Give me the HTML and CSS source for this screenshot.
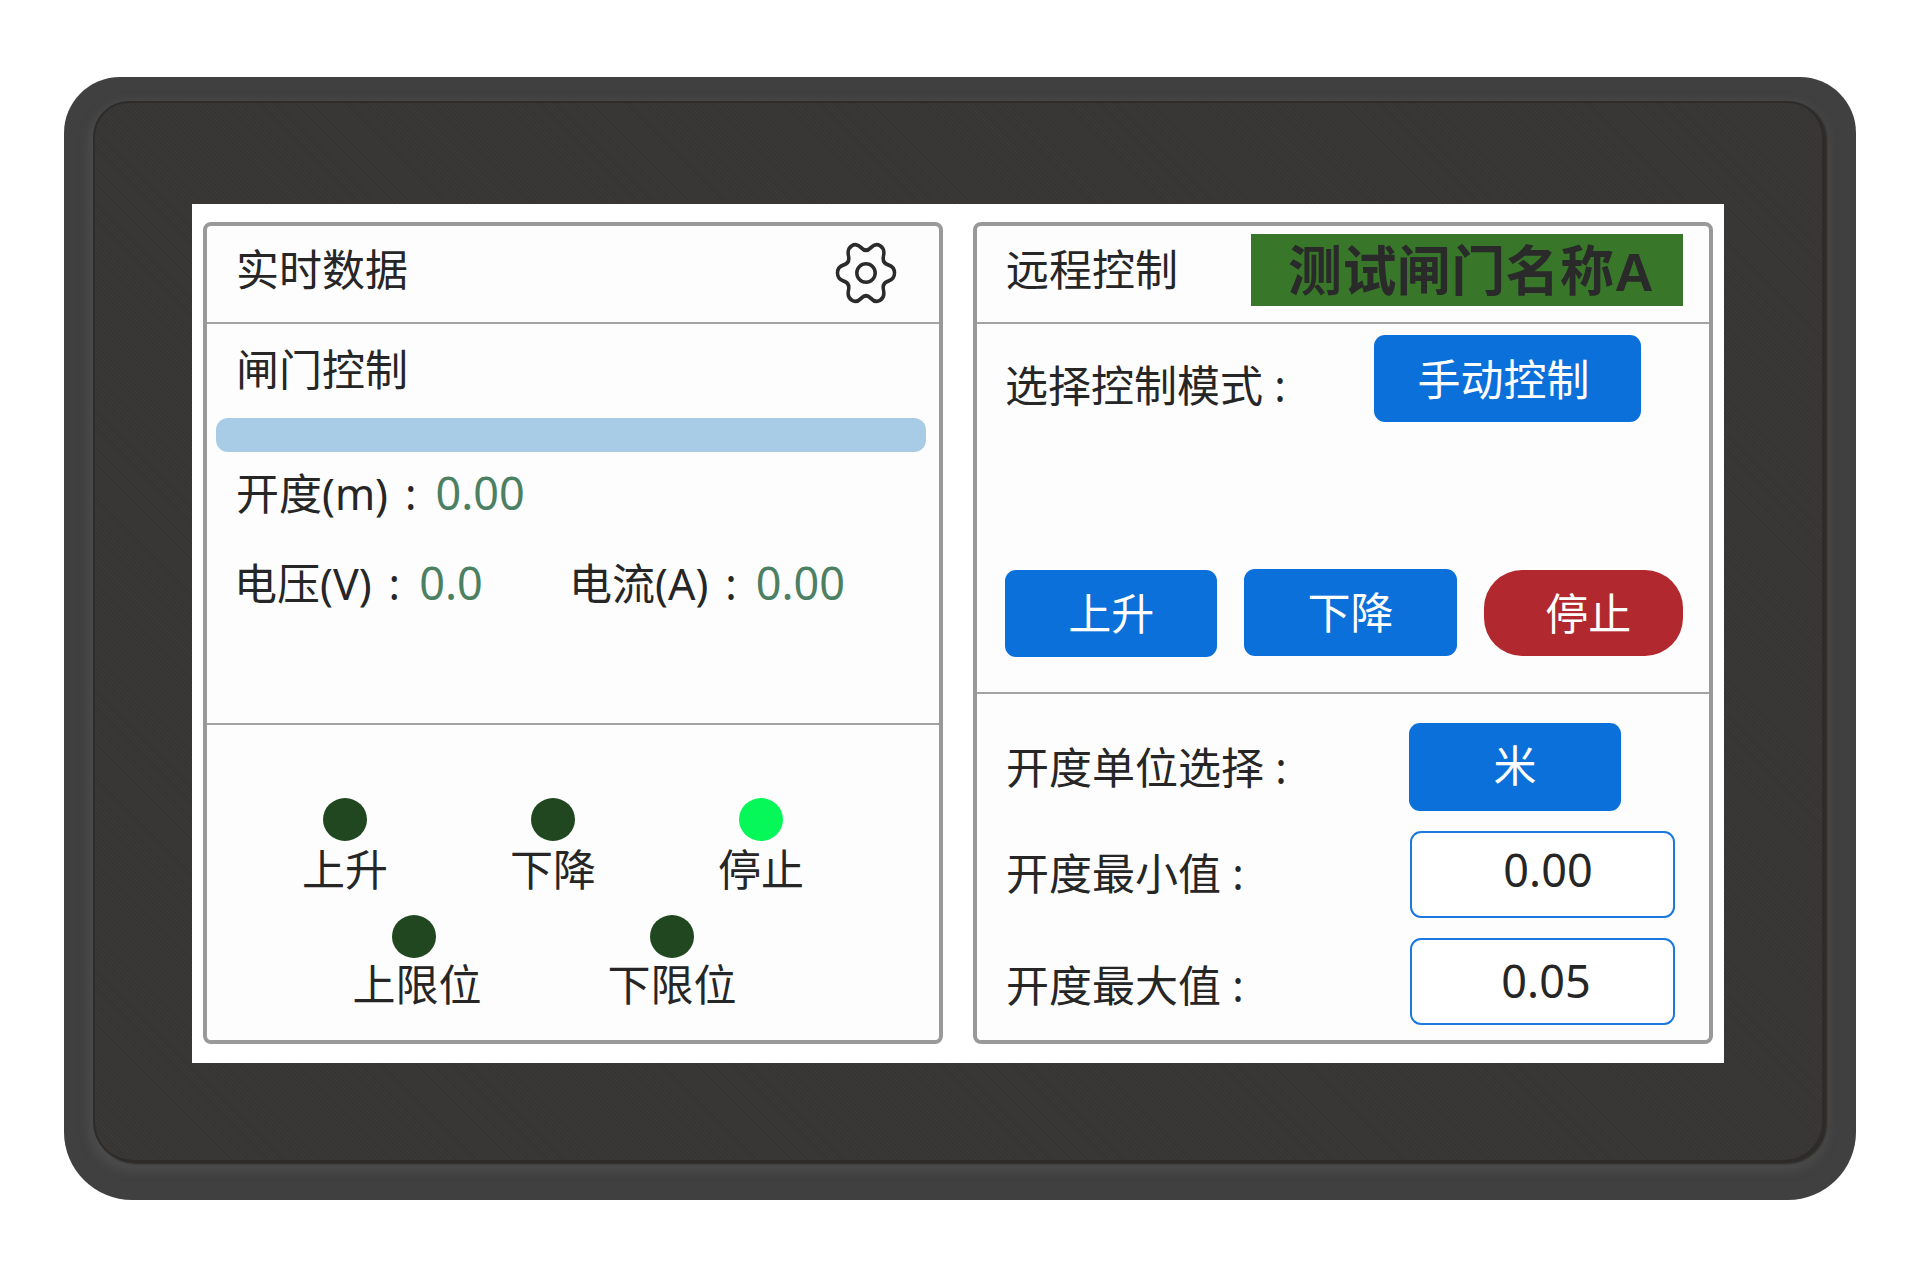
FILE: index.html
```html
<!DOCTYPE html>
<html lang="zh-CN">
<head>
  <meta charset="UTF-8" />
  <title>闸门控制</title>
  <link rel="stylesheet" href="styles.css">
</head>
<body>
  <div class="bezel">
    <div class="glass">
      <div class="screen">

        <section class="panel">
          <div class="panel-head">
            <span class="head-title">实时数据</span>
            <svg class="gear" viewBox="-32 -32 64 64" aria-label="设置">
              <path transform="scale(1 1.1)" d="M29.45 0Q29.45 5.72 22.95 7.61Q16.45 9.5 18.07 16.07Q19.68 22.64 14.73 25.5Q9.77 28.37 4.89 23.69Q0 19 -4.89 23.69Q-9.77 28.37 -14.73 25.5Q-19.68 22.64 -18.07 16.07Q-16.45 9.5 -22.95 7.61Q-29.45 5.72 -29.45 0Q-29.45 -5.72 -22.95 -7.61Q-16.45 -9.5 -18.07 -16.07Q-19.68 -22.64 -14.73 -25.5Q-9.77 -28.37 -4.89 -23.69Q0 -19 4.89 -23.69Q9.77 -28.37 14.73 -25.5Q19.68 -22.64 18.07 -16.07Q16.45 -9.5 22.95 -7.61Q29.45 -5.72 29.45 0Z" />
              <circle cx="0" cy="0" r="9.5" />
            </svg>
          </div>

          <div class="data-block">
            <div class="data-title">闸门控制</div>
            <div class="level-bar"></div>
            <div class="data-row opening">
              <span class="data-item">开度(m)<span class="colon">:</span><span class="value">0.00</span></span>
            </div>
            <div class="data-row power">
              <span class="data-item voltage">电压(V)<span class="colon">:</span><span class="value">0.0</span></span>
              <span class="data-item">电流(A)<span class="colon">:</span><span class="value">0.00</span></span>
            </div>
          </div>

          <div class="lights">
            <div class="light-row first">
              <div class="light"><i class="dot"></i><span>上升</span></div>
              <div class="light"><i class="dot"></i><span>下降</span></div>
              <div class="light"><i class="dot on"></i><span>停止</span></div>
            </div>
            <div class="light-row second">
              <div class="light"><i class="dot"></i><span class="upper-limit">上限位</span></div>
              <div class="light"><i class="dot"></i><span>下限位</span></div>
            </div>
          </div>
        </section>

        <section class="panel">
          <div class="panel-head">
            <span class="head-title">远程控制</span>
            <span class="gate-name">测试闸门名称A</span>
          </div>

          <div class="control-block">
            <div class="mode-row">
              <span class="field-label">选择控制模式 :</span>
              <button class="btn mode-btn">手动控制</button>
            </div>
            <div class="action-row">
              <button class="btn action-btn">上升</button>
              <button class="btn action-btn down">下降</button>
              <button class="btn stop-btn">停止</button>
            </div>
          </div>

          <div class="range-block">
            <div class="range-row">
              <span class="field-label unit-label">开度单位选择 :</span>
              <button class="btn unit-btn">米</button>
            </div>
            <div class="range-row">
              <span class="field-label">开度最小值 :</span>
              <div class="num-box min-box">0.00</div>
            </div>
            <div class="range-row">
              <span class="field-label max-label">开度最大值 :</span>
              <div class="num-box max-box">0.05</div>
            </div>
          </div>
        </section>

      </div>
    </div>
  </div>
</body>
</html>
```

FILE: styles.css
```css
* {
  box-sizing: border-box;
}

body {
  margin: 0;
  background: #fff;
  color: #262626;
  font-family: "Noto Sans", "Noto Sans CJK SC", sans-serif;
  font-size: 43px;
  line-height: 48px;
}

.bezel {
  width: 1792px;
  height: 1123px;
  margin: 77px 0 0 64px;
  padding: 26px 34px 40px 31px;
  background: #404040;
  border-radius: 56px 56px 68px 68px;
}

.glass {
  height: 100%;
  padding: 101px 98px 97px 97px;
  background-color: #3a3836;
  background-image: repeating-linear-gradient(45deg, rgba(0,0,0,0.07) 0 1px, transparent 1px 3px);
  border-radius: 34px 34px 38px 38px;
  box-shadow: 0 0 0 2px #2e2b28, 3px 2px 2px 2px #2e2b28, 0 5px 9px 7px rgba(84, 84, 86, 0.55);
}

.screen {
  display: flex;
  gap: 30px;
  height: 859px;
  padding: 18px 11px 19px;
  background: #fff;
}

.panel {
  width: 740px;
  height: 822px;
  background: #fdfdfd;
  border: 4px solid #999;
  border-radius: 8px;
}

.panel-head {
  display: flex;
  align-items: center;
  justify-content: space-between;
  height: 98px;
  padding: 0 29px 8px;
  border-bottom: 2px solid #a3a3a3;
}

.gear {
  width: 62px;
  height: 62px;
  margin: 6px 13px 0 0;
  fill: none;
  stroke: #2b2b2b;
  stroke-width: 3.6;
}

.gate-name {
  width: 432px;
  height: 72px;
  margin-right: -3px;
  padding-left: 37px;
  background: #38772a;
  color: #2a2a2a;
  font-family: "Liberation Sans", "Noto Sans CJK SC", sans-serif;
  font-size: 54px;
  font-weight: 700;
  letter-spacing: 0.4px;
  line-height: 76px;
  white-space: nowrap;
}

/* left panel */
.data-block {
  height: 401px;
  padding: 22px 13px 0 9px;
  border-bottom: 2px solid #a3a3a3;
}

.data-title {
  padding-left: 20px;
}

.level-bar {
  height: 34px;
  margin-top: 24px;
  background: #a9cce6;
  border-radius: 12px;
}

.data-row {
  display: flex;
  padding-left: 20px;
}

.opening {
  margin-top: 17px;
}

.power {
  margin-top: 41px;
  padding-left: 18px;
}

.voltage {
  width: 335px;
}

.colon {
  padding: 0 19px 0 17px;
}

.value {
  color: #4b8063;
  font-size: 45px;
}

.lights {
  padding-top: 73px;
}

.light-row {
  display: flex;
}

.light {
  display: flex;
  flex-direction: column;
  align-items: center;
}

.first {
  padding-left: 34px;
}

.first .light {
  width: 208px;
}

.second {
  margin-top: 21px;
  padding-left: 78px;
}

.second .light {
  width: 258px;
}

.upper-limit {
  margin-left: 6px;
}

.dot {
  width: 44px;
  height: 43px;
  margin-bottom: 5px;
  background: #20471f;
  border-radius: 50%;
}

.second .dot {
  margin-bottom: 3px;
}

.dot.on {
  background: #05f857;
}

/* right panel */
.control-block {
  height: 370px;
  padding: 11px 26px 0 28px;
  border-bottom: 2px solid #a3a3a3;
}

.btn {
  display: block;
  padding: 0;
  background: #0b70da;
  color: #fff;
  border: none;
  border-radius: 11px;
  font-family: "Noto Sans CJK SC", sans-serif;
  font-size: 43px;
}

.mode-row {
  display: flex;
  align-items: center;
}

.mode-row .field-label {
  margin-top: 14px;
}

.mode-btn {
  width: 267px;
  height: 87px;
  margin: 0 42px 0 auto;
  padding: 0 8px 4px 0;
}

.action-row {
  display: flex;
  align-items: flex-start;
  gap: 27px;
  margin-top: 148px;
}

.action-btn {
  width: 213px;
  height: 87px;
  padding-bottom: 5px;
}

.action-btn.down {
  margin-top: -1px;
}

.stop-btn {
  width: 200px;
  height: 86px;
  padding: 0 0 5px 10px;
  background: #b1282e;
  border-radius: 38px;
}

.range-block {
  padding: 29px 0 0 29px;
}

.range-row {
  display: flex;
  align-items: center;
  justify-content: space-between;
  width: 669px;
  height: 88px;
  margin-bottom: 19px;
}

.unit-label {
  margin-top: 2px;
}

.max-label {
  margin-top: 10px;
}

.unit-btn {
  width: 212px;
  height: 88px;
  margin-right: 54px;
  padding-bottom: 8px;
}

.num-box {
  width: 265px;
  height: 87px;
  background: #fff;
  border: 2px solid #1a78e0;
  border-radius: 11px;
  font-size: 45px;
  text-align: center;
}

.min-box {
  padding-left: 11px;
  line-height: 74px;
}

.max-box {
  padding-left: 7px;
  line-height: 81px;
}
```
